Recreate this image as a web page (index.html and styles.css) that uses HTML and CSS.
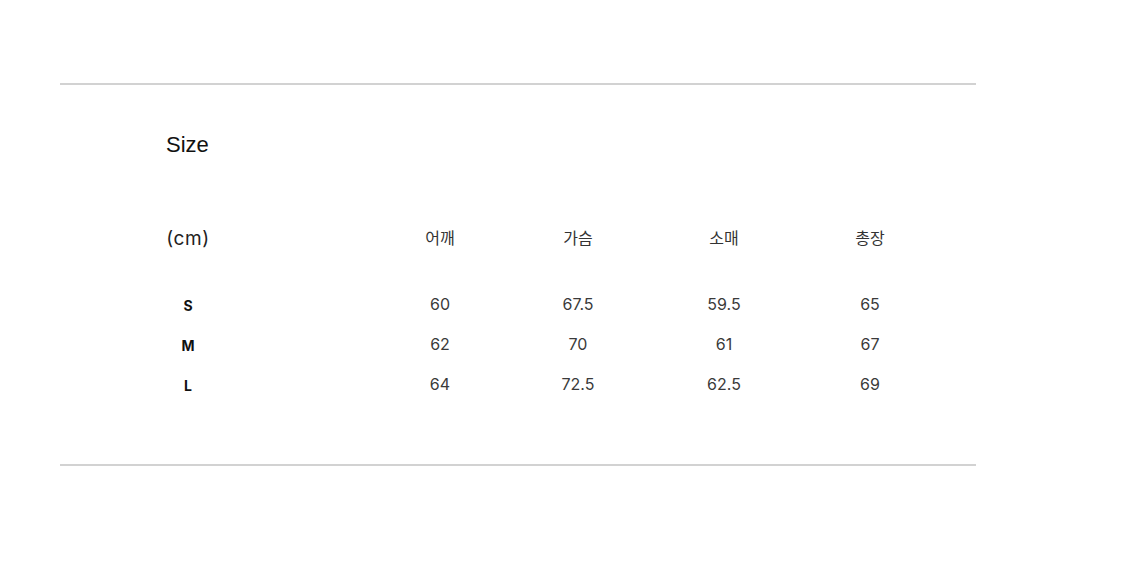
FILE: index.html
```html
<!DOCTYPE html>
<html lang="ko">
<head>
<meta charset="utf-8">
<link rel="stylesheet" href="styles.css">
</head>
<body>
<section class="size-block">
  <h2 class="title">Size</h2>
  <div class="table">
    <div class="row head">
      <div class="label unit">(cm)</div>
      <div class="cell">어깨</div>
      <div class="cell">가슴</div>
      <div class="cell">소매</div>
      <div class="cell">총장</div>
    </div>
    <div class="row data first">
      <div class="label">S</div>
      <div class="cell">60</div>
      <div class="cell">67.5</div>
      <div class="cell">59.5</div>
      <div class="cell">65</div>
    </div>
    <div class="row data">
      <div class="label">M</div>
      <div class="cell">62</div>
      <div class="cell">70</div>
      <div class="cell">61</div>
      <div class="cell">67</div>
    </div>
    <div class="row data">
      <div class="label">L</div>
      <div class="cell">64</div>
      <div class="cell">72.5</div>
      <div class="cell">62.5</div>
      <div class="cell">69</div>
    </div>
  </div>
</section>
</body>
</html>
```

FILE: styles.css
```css
html, body {
  margin: 0;
  padding: 0;
  background: #ffffff;
}

body {
  padding-top: 83px;
}

.size-block {
  margin-left: 60px;
  width: 916px;
  border-top: 2px solid #d2d2d2;
  border-bottom: 2px solid #d2d2d2;
  padding: 48px 0 60px 106px;
  box-sizing: border-box;
}

.title {
  margin: 0;
  font-family: "Liberation Sans", Arial, sans-serif;
  font-weight: 400;
  font-size: 22px;
  line-height: 24px;
  color: #111111;
}

.table {
  margin-top: 61px;
}

.row {
  display: grid;
  grid-template-columns: 204px 140px 136px 156px 136px;
  align-items: center;
  height: 40px;
}

.row.first {
  margin-top: 26px;
}

.label {
  width: 44px;
  text-align: center;
  font-family: Inter, "Noto Sans", sans-serif;
  font-weight: 700;
  font-size: 14px;
  color: #111111;
  padding-top: 3px;
}

.label.unit {
  font-weight: 400;
  font-size: 19px;
  letter-spacing: 0.6px;
  color: #222222;
  padding-top: 0;
}

.cell {
  text-align: center;
  font-family: Inter, "Noto Sans CJK KR", sans-serif;
  font-size: 16px;
  color: #3a3a3a;
}

.head .cell {
  font-family: "Noto Sans CJK KR", sans-serif;
  font-size: 16px;
  color: #333333;
  padding-bottom: 2px;
}
```
